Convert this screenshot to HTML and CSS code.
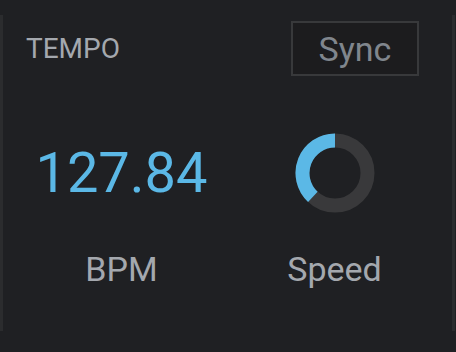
FILE: index.html
```html
<!DOCTYPE html>
<html lang="en">
<head>
    <meta charset="UTF-8">
    <meta name="viewport" content="width=device-width, initial-scale=1.0">
    <title>Tempo</title>
    <link rel="stylesheet" href="styles.css">
</head>
<body>
    <div class="panel">
        <div class="panel-header">
            <div class="label title">TEMPO</div>
            <button class="sync-button">Sync</button>
        </div>
        <div class="tempo-grid">
            <div class="cell">
                <div class="bpm-value">127.84</div>
            </div>
            <div class="cell">
                <svg class="speed-dial" width="80" height="80" viewBox="0 0 80 80">
                    <circle cx="40" cy="40" r="32.5" fill="none" stroke="#39393b" stroke-width="14"/>
                    <path d="M40 7.5 A32.5 32.5 0 0 0 17.83 63.77" fill="none" stroke="#5bb8e6" stroke-width="14"/>
                </svg>
            </div>
            <div class="label caption">BPM</div>
            <div class="label caption">Speed</div>
        </div>
    </div>
</body>
</html>
```

FILE: styles.css
```css
* {
    box-sizing: border-box;
    margin: 0;
    padding: 0;
}

body {
    width: 456px;
    height: 352px;
    overflow: hidden;
    background-color: #1f2023;
    font-family: 'Roboto', 'Liberation Sans', sans-serif;
}

.panel {
    margin: 15px 1px 0 0;
    height: 316px;
    border-left: 3px solid #2b2c2e;
    border-right: 3px solid #2b2c2e;
}

.panel-header {
    display: flex;
    justify-content: space-between;
    align-items: center;
    padding: 6px 33px 0 23px;
}

.label {
    color: #a4a8ae;
}

.title {
    font-size: 28px;
}

.sync-button {
    width: 128px;
    height: 55px;
    background-color: #1c1c1e;
    border: 2px solid #38393b;
    color: #80868d;
    font-family: 'Roboto', 'Liberation Sans', sans-serif;
    font-size: 34px;
    line-height: 1;
    cursor: pointer;
}

.tempo-grid {
    display: grid;
    grid-template-columns: 213px 213px;
    grid-template-rows: 80px auto;
    row-gap: 39px;
    padding: 57px 0 0 12px;
}

.cell {
    display: flex;
    justify-content: center;
    align-items: center;
}

.bpm-value {
    color: #5bb8e6;
    font-size: 56px;
    line-height: 1;
}

.caption {
    text-align: center;
    font-size: 34px;
    line-height: 1;
}
```
